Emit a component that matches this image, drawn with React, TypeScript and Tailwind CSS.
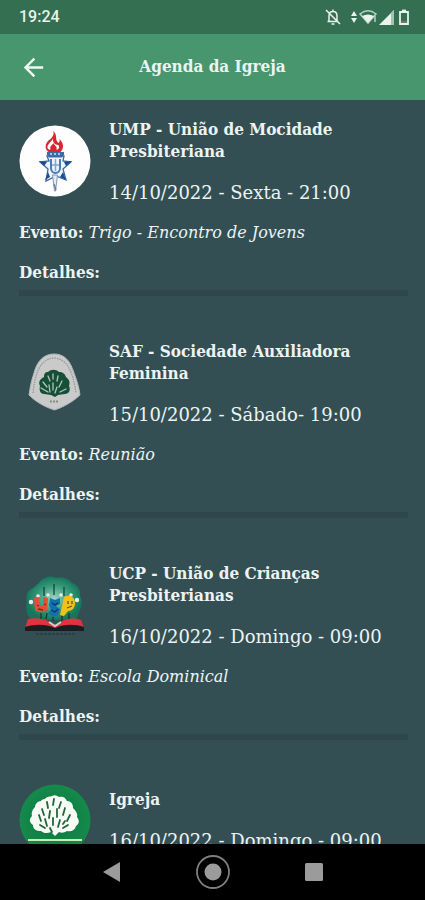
import type { ReactNode } from "react";

type AgendaEvent = {
  group: string;
  date: string;
  event?: string;
  emblem: ReactNode;
};

function TorchEmblem() {
  return (
    <svg viewBox="0 0 72 72" className="size-18" role="img" aria-label="UMP">
      <circle cx="36" cy="36" r="35.5" fill="#fefefe" />
      <path
        d="M34.500 6c5 6 .5 8 5 12 1-1 1.500-2.500 1-4 4 4 5 9 1 13h-12c-5-4-3-10 2-13 3-3 3.500-5 3-8z"
        fill="#d9262f"
      />
      <path
        d="M33.500 12c1 5-6 6-5 11 1 2 3 2 3 1-1-3 2-4 3-6 1 3 4 3 3 7 3-1 3-3 2-5-4 0-6-3-6-8z"
        fill="#fff"
      />
      <path d="M35 20c-2 2-1 4 0 6 2-2 2-4 0-6z" fill="#d9262f" />
      <path
        d="M28 31h17l-1 5 8 1-8 7 3 11-10-4-10 5 2-12-8-7 9-1z"
        fill="#eef4fb"
        stroke="#3b68a8"
        strokeWidth="1.300"
      />
      <path d="M28 27h17v2.500l-2 3H30l-2-3z" fill="#3c6ca8" />
      <path d="M31 29h2M35 29h2M39 29h2" stroke="#cfe2f7" strokeWidth="1.500" />
      <path d="M20 36l8 1-3 4zM53 36l-8 1 2 4zM26 55l3-8 2 5zM47 55l-3-8-3 5z" fill="#204b8e" />
      <path d="M32 34v9c0 3 2 5 4.500 5s4.500-2 4.500-5v-9" fill="none" stroke="#4a7bb6" strokeWidth="2" />
      <path d="M36.500 34v12M33 40h7" stroke="#7ca6d4" strokeWidth="1.500" />
      <path d="M33.500 50h5l-2 16h-1z" fill="#e6ebf2" stroke="#8399b8" strokeWidth="1" />
      <path d="M35 59l2 6" stroke="#5d7496" strokeWidth="1.200" />
    </svg>
  );
}

function ShieldEmblem() {
  return (
    <svg viewBox="0 0 72 72" className="size-18" role="img" aria-label="SAF">
      <path
        d="M35 7C25 7 18 14 15 26c-3 9-4 15-5 22C17 55 26 60 35.500 63c9-3 18-8 25.500-15C60 40 58 34 55 26 51 13 45 7 35 7z"
        fill="#c9cac9"
        stroke="#aeb8b6"
        strokeWidth="1"
      />
      <path
        d="M14 46c2-18 6-34 21-35 15 1 19 16 22 35"
        fill="none"
        stroke="#929b99"
        strokeWidth="1.300"
        strokeDasharray="1.500 1"
      />
      <path
        d="M29 25c3-3 8-3 11 0 4 0 6 2 7 5 4 3 4 6 3 9 2 4 0 8-4 8l-7 1-3 2-4-2-7-1c-4 0-5-4-4-8-2-4 0-7 4-9 0-3 1-5 4-5z"
        fill="#164f38"
      />
      <path
        d="M34 27v5M29 29l2 5M39 29l-1 5M43 34l-3 6M24 35l4 5M34 36v7M22 41l7 4M47 42l-6 3M30 38l1 7M38 40l-2 6"
        stroke="#b3c5b8"
        strokeWidth="1.300"
        strokeLinecap="round"
      />
      <path d="M31 54.500h9" stroke="#858d8a" strokeWidth="2" strokeDasharray="2 1" />
    </svg>
  );
}

function ChildrenEmblem() {
  return (
    <svg viewBox="0 0 72 72" className="size-18" role="img" aria-label="UCP">
      <defs>
        <radialGradient id="tree-glow">
          <stop offset="0" stopColor="#9bd3c0" />
          <stop offset=".6" stopColor="#36997a" />
          <stop offset="1" stopColor="#17765a" />
        </radialGradient>
      </defs>
      <path
        d="M20 14c4-6 11-8 17-5 7-2 13 1 16 5 6 2 9 7 8 13 3 5 2 11-1 16l-3 8H13c-5-4-7-12-5-18-2-7 1-12 6-14z"
        fill="url(#tree-glow)"
      />
      <path d="M25 18v9M35 15v11M45 18v9" stroke="#123d36" strokeWidth="1.200" />
      <g fill="#e1eee8">
        <circle cx="12" cy="33" r="2.200" />
        <circle cx="19" cy="27" r="1.800" />
        <circle cx="29" cy="26" r="1.800" />
        <circle cx="42" cy="26" r="1.800" />
        <circle cx="52" cy="26" r="1.800" />
        <circle cx="58" cy="31" r="2.200" />
      </g>
      <path d="M15 29l5-1v9h4v-9l5 1-1 12c-4 3-8 3-12 0z" fill="#e54e35" />
      <path d="M18 36l2 1M25 36l2-1M19 40l5 1" stroke="#712c2e" strokeWidth="1.300" />
      <path d="M31 29l5 2 5-2v6l-4 2 4 3-2 6-5 2-5-4 3-3-2-5z" fill="#126fb0" />
      <path d="M33 34l3 2 3-2M32 41l4 2 3-3" fill="none" stroke="#0b355e" strokeWidth="1.300" />
      <path d="M45 28c6-3 11 0 11 6 0 5-3 8-7 8l-4 5-4-1z" fill="#f2c119" />
      <path d="M49 32v3M53 32v3M48 39l5-2" stroke="#68521c" strokeWidth="1.300" />
      <path d="M22 44v6M28 44l-1 6M34 48v4M43 47v5M50 44v6" stroke="#17382f" strokeWidth="1.300" />
      <path d="M9 50c9-2 19 0 27 6 8-6 17-8 26-5l3 8H6z" fill="#e2313f" />
      <path d="M6 58c10-3 21-3 30 1 9-4 20-4 29-1v4H6z" fill="#171f20" />
      <path d="M30 53l6 4 6-4" fill="none" stroke="#bcd9cb" strokeWidth="2" />
      <path d="M17 65h40" stroke="#2a4043" strokeWidth="2" strokeDasharray="3 1" />
    </svg>
  );
}

function BushEmblem() {
  return (
    <svg viewBox="0 0 72 72" className="size-18" role="img" aria-label="Igreja">
      <defs>
        <radialGradient id="seal">
          <stop offset="0" stopColor="#0a7840" />
          <stop offset="1" stopColor="#148a4b" />
        </radialGradient>
      </defs>
      <circle cx="36" cy="36" r="35.500" fill="url(#seal)" />
      <path
        d="M26 15c2-3 5-2 7-3 3-2 6 0 7 1 4-1 6 0 8 4 4 0 6 3 6 7 3 3 5 6 4 9 3 4 2 7-1 9-1 4-4 6-9 5-3 2-6 2-8 1l-4 4-4-4c-4 2-8 1-10-1-5 0-8-2-8-6-4-3-4-6-1-9-1-4 1-7 3-9 0-3 3-6 6-6 0-1 2-2 4-2z"
        fill="#f8fbf5"
      />
      <path
        d="M28 18l1 6M35 15l-1 6M42 18l-2 6M23 25l2 6M31 27l-1 7M38 25v8M46 24l-2 7M51 31l-3 6M20 31l2 6M26 35l2 7M34 34v7M41 36l-2 7M21 41l5 3M49 41l-5 3M31 44l2 4M46 37l-2 3"
        stroke="#20663b"
        strokeWidth="1.800"
        strokeLinecap="round"
      />
      <path d="M9 56h54" stroke="#c9ecb0" strokeWidth="2" />
    </svg>
  );
}

const events: AgendaEvent[] = [
  {
    group: "UMP - União de Mocidade Presbiteriana",
    date: "14/10/2022 - Sexta - 21:00",
    event: "Trigo - Encontro de Jovens",
    emblem: <TorchEmblem />,
  },
  {
    group: "SAF - Sociedade Auxiliadora Feminina",
    date: "15/10/2022 - Sábado- 19:00",
    event: "Reunião",
    emblem: <ShieldEmblem />,
  },
  {
    group: "UCP - União de Crianças Presbiterianas",
    date: "16/10/2022 - Domingo - 09:00",
    event: "Escola Dominical",
    emblem: <ChildrenEmblem />,
  },
  {
    group: "Igreja",
    date: "16/10/2022 - Domingo - 09:00",
    emblem: <BushEmblem />,
  },
];

function StatusBar() {
  return (
    <div className="flex h-[34px] shrink-0 items-center justify-between bg-[#336f50] pr-4 pl-[19px] text-[#e9f3ec]">
      <time className="font-['Roboto',sans-serif] text-base font-medium">19:24</time>
      <div className="flex items-center gap-0.5">
        <svg viewBox="0 0 16 18" className="mr-2 h-[18px] w-4" fill="none" stroke="currentColor" strokeWidth="1.500">
          <path d="M4 13V8c0-3 2-4.500 4-4.500S12 5 12 8v5M2.500 13.500h11M8 1.500v2M6.500 16h3M1 2l14 14" />
        </svg>
        <svg viewBox="0 0 6 14" className="h-3.5 w-1.5" fill="currentColor">
          <path d="M3 1l3 5H0zM3 13l3-5H0z" />
        </svg>
        <svg viewBox="0 0 18 16" className="h-4 w-[18px]">
          <path d="M1 5c5-4 11-4 16 0L9 14z" fill="none" stroke="#b7d1c1" strokeWidth="1.500" />
          <path d="M3 7c4-2 8-2 12 0l-6 7z" fill="currentColor" />
          <path d="M16 7v6" stroke="#b7d1c1" strokeWidth="1.500" />
        </svg>
        <svg viewBox="0 0 16 16" className="h-4 w-4">
          <path d="M0 16L15 1v15z" fill="currentColor" />
          <path d="M12 4l3-3v15h-3z" fill="#a4c2b0" />
        </svg>
        <svg viewBox="0 0 10 16" className="ml-0.5 h-4 w-2.5" fill="none" stroke="currentColor" strokeWidth="1.800">
          <path d="M1 3h8v12H1z" />
          <path d="M3 1.500h4" />
          <path d="M2 13h6" stroke="#b98472" strokeWidth="1" />
        </svg>
      </div>
    </div>
  );
}

function EventCard({ item }: { item: AgendaEvent }) {
  return (
    <article className="mb-11">
      <div className="flex items-center gap-[18px]">
        <div className="shrink-0">{item.emblem}</div>
        <div>
          <h2 className="max-w-[260px] font-['DejaVu_Serif_Condensed','DejaVu_Serif',serif] text-[17px] leading-[22px] font-bold">
            {item.group}
          </h2>
          <p className="mt-5 text-lg leading-[22px] whitespace-nowrap">{item.date}</p>
        </div>
      </div>
      {item.event && (
        <>
          <p className="mt-[17px] leading-[22px]">
            <strong className="font-['DejaVu_Serif_Condensed','DejaVu_Serif',serif] text-[17px] font-bold">
              Evento:
            </strong>{" "}
            <em>{item.event}</em>
          </p>
          <p className="mt-[17px] font-['DejaVu_Serif_Condensed','DejaVu_Serif',serif] text-[17px] leading-[22px] font-bold">
            Detalhes:
          </p>
          <hr className="mt-[7px] h-1.5 border-0 bg-[#2d474c]" />
        </>
      )}
    </article>
  );
}

export default function App() {
  return (
    <div className="flex h-screen flex-col bg-[#334f54] font-['DejaVu_Serif',serif] text-base text-[#edf3f3]">
      <StatusBar />
      <header className="grid h-[66px] shrink-0 grid-cols-[48px_1fr_48px] items-center bg-[#47966e]">
        <button type="button" aria-label="Voltar" className="flex justify-end text-[#eff8f2]">
          <svg viewBox="0 0 24 24" className="size-[29px]" fill="currentColor">
            <path d="M20 11H7.830l5.590-5.590L12 4l-8 8 8 8 1.410-1.410L7.830 13H20z" />
          </svg>
        </button>
        <h1 className="text-center font-['DejaVu_Serif_Condensed','DejaVu_Serif',serif] text-[17px] font-bold">
          Agenda da Igreja
        </h1>
      </header>
      <main className="min-h-0 flex-1 overflow-y-auto pt-[18px] pr-[17px] pl-[19px] [scrollbar-width:none]">
        {events.map((item) => (
          <EventCard key={item.group} item={item} />
        ))}
      </main>
      <nav className="flex h-14 shrink-0 items-center justify-center gap-[67px] bg-black text-[#9b9b9b]">
        <button type="button" aria-label="Voltar à tela anterior">
          <svg viewBox="0 0 34 34" className="size-[34px]" fill="currentColor">
            <path d="M8 17L25 7v20z" />
          </svg>
        </button>
        <button type="button" aria-label="Início">
          <svg viewBox="0 0 34 34" className="size-[34px]">
            <circle cx="17" cy="17" r="16" fill="none" stroke="#7f7f7f" strokeWidth="1.800" />
            <circle cx="17" cy="17" r="8.500" fill="currentColor" />
          </svg>
        </button>
        <button type="button" aria-label="Recentes">
          <svg viewBox="0 0 34 34" className="size-[34px]" fill="currentColor">
            <rect x="8" y="8" width="18" height="18" rx="1.500" />
          </svg>
        </button>
      </nav>
    </div>
  );
}
